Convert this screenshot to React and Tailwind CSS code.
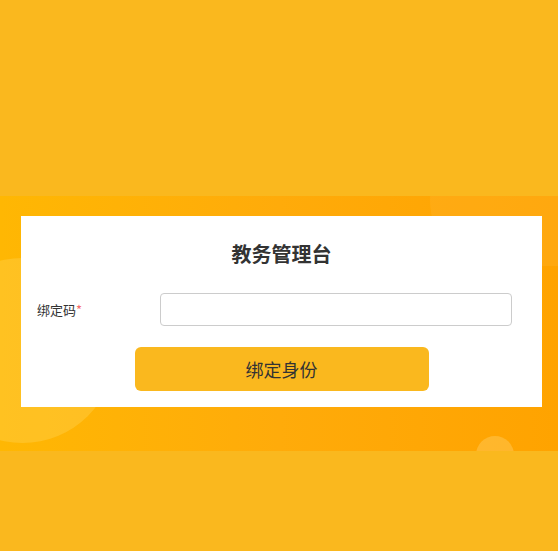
export default function App() {
  return (
    <div
      className="w-[558px] h-[551px] bg-[#fab81e] flex flex-col overflow-hidden"
      style={{ fontFamily: '"Noto Sans CJK SC", "Noto Sans", sans-serif' }}
    >
      <div className="h-[196px] shrink-0" />
      <div className="relative h-[255px] shrink-0 overflow-hidden bg-gradient-to-r from-[#ffb703] via-[#ffab0a] to-[#ffa300]">
        <div className="absolute left-[-70px] top-[62px] w-[185px] h-[185px] rounded-full bg-[#ffd65c] opacity-35" />
        <div className="absolute left-[476px] top-[240px] w-[38px] h-[38px] rounded-full bg-[#ffc34a] opacity-60" />
        <div className="absolute left-[430px] top-[-60px] w-[200px] h-[130px] rounded-full bg-[#ffc04a] opacity-20" />
        <div className="relative ml-[21px] mt-[20px] w-[521px] h-[191px] bg-white flex flex-col px-[16px] pt-[22px]">
          <div className="text-center text-[20px] leading-[32px] font-bold text-[#333]">教务管理台</div>
          <div className="flex items-center mt-[23px]">
            <div className="w-[123px] text-[13px] text-[#333]">
              绑定码<span className="text-[#f56c6c]">*</span>
            </div>
            <input className="w-[352px] h-[33px] border border-[#cccccc] rounded-[4px] outline-none px-2" />
          </div>
          <div className="flex justify-center mt-[21px]">
            <button className="w-[294px] h-[44px] rounded-[6px] bg-[#fab81e] text-[18px] font-normal text-[#333]">
              绑定身份
            </button>
          </div>
        </div>
      </div>
      <div className="flex-1" />
    </div>
  );
}
